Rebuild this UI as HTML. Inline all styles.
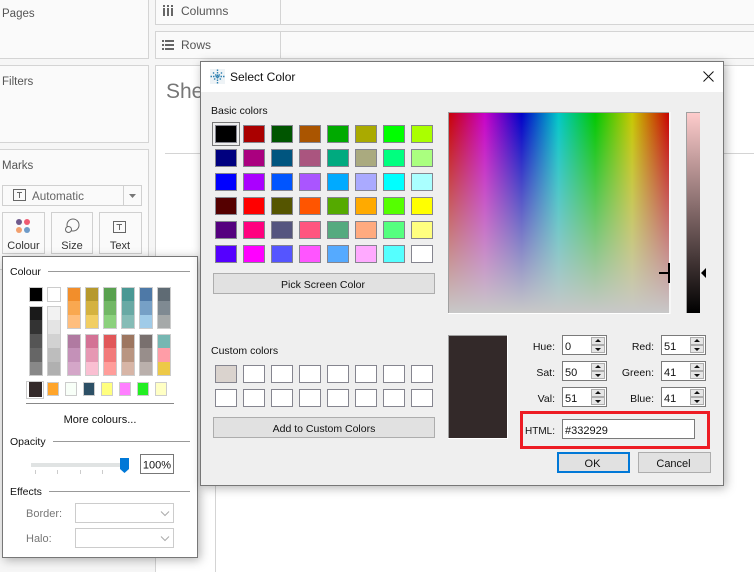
<!DOCTYPE html>
<html><head><meta charset="utf-8"><style>
html,body{margin:0;padding:0;background:#fff;width:754px;height:572px;overflow:hidden}
svg{display:block;font-family:"Liberation Sans",sans-serif}
text{font-size:10.5px;fill:#111}
.g text{fill:#555}
.c{text-anchor:middle}
.r{text-anchor:end}
</style></head><body>
<svg width="754" height="572" viewBox="0 0 754 572" xmlns="http://www.w3.org/2000/svg">
<defs>
<linearGradient id="hue" x1="0" x2="1" y1="0" y2="0">
<stop offset="0" stop-color="#c80000"/><stop offset=".1667" stop-color="#c800c8"/><stop offset=".3333" stop-color="#0000c8"/><stop offset=".5" stop-color="#00c8c8"/><stop offset=".6667" stop-color="#00c800"/><stop offset=".8333" stop-color="#c8c800"/><stop offset="1" stop-color="#c80000"/>
</linearGradient>
<linearGradient id="sat" x1="0" x2="0" y1="0" y2="1"><stop offset="0" stop-color="#c8c8c8" stop-opacity="0"/><stop offset="1" stop-color="#c8c8c8"/></linearGradient>
<linearGradient id="lum" x1="0" x2="0" y1="0" y2="1"><stop offset="0" stop-color="#ffcdcd"/><stop offset="1" stop-color="#000"/></linearGradient>
<filter id="sh" x="-10%" y="-10%" width="120%" height="120%"><feDropShadow dx="2" dy="2" stdDeviation="5" flood-color="#000" flood-opacity=".3"/></filter>
</defs>

<!-- background workspace -->
<rect width="754" height="572" fill="#f6f6f6"/>
<g fill="#fafafa" stroke="#d4d4d4" shape-rendering="crispEdges">
<rect x="-2" y="-2" width="150.500" height="60.500"/>
<rect x="-2" y="65.500" width="150.500" height="77"/>
<rect x="-2" y="149.500" width="150.500" height="120"/>
<rect x="155.500" y="-2" width="610" height="26.500"/>
<rect x="155.500" y="31.500" width="610" height="27"/>
<rect x="155.500" y="65.500" width="610" height="520" fill="#fff"/>
</g>
<g stroke="#d4d4d4" shape-rendering="crispEdges">
<path d="M280.500 0V24M280.500 32V58M165 153.500H754M215.500 153V572"/>
</g>
<g class="g">
<text x="2" y="17" style="font-size:11.5px">Pages</text>
<text x="2" y="85" style="font-size:11.5px">Filters</text>
<text x="2" y="169" style="font-size:11.5px">Marks</text>
<text x="181" y="15" style="font-size:12px">Columns</text>
<text x="181" y="49" style="font-size:12px">Rows</text>
<text x="166" y="98" style="font-size:21px;fill:#777">Sheet 1</text>
</g>
<!-- columns/rows icons -->
<g fill="#666" shape-rendering="crispEdges">
<rect x="163" y="8" width="2" height="8"/><rect x="167" y="8" width="2" height="8"/><rect x="171" y="8" width="2" height="8"/>
<rect x="163" y="5" width="2" height="2"/><rect x="167" y="5" width="2" height="2"/><rect x="171" y="5" width="2" height="2"/>
<rect x="162" y="40" width="2" height="2"/><rect x="162" y="44" width="2" height="2"/><rect x="162" y="48" width="2" height="2"/>
<rect x="165" y="40" width="9" height="2"/><rect x="165" y="44" width="9" height="2"/><rect x="165" y="48" width="9" height="2"/>
</g>

<!-- marks controls -->
<g fill="#fafafa" stroke="#d0d0d0" shape-rendering="crispEdges">
<rect x="2.500" y="185.500" width="139" height="20"/>
<rect x="2.500" y="212.500" width="42" height="41"/>
<rect x="51.500" y="212.500" width="41" height="41"/>
<rect x="99.500" y="212.500" width="42" height="41"/>
<path d="M123.500 186V205" fill="none"/>
</g>
<g fill="none" stroke="#666" shape-rendering="crispEdges">
<rect x="13.500" y="189.500" width="12" height="11"/>
<rect x="113.500" y="221.500" width="12" height="11"/>
<path d="M17 192.500H22M19.500 192.500V198M116.500 224.500H122M119.500 224.500V230"/>
</g>
<path d="M129 194h7l-3.500 4z" fill="#777"/>
<text x="32" y="200" style="font-size:11.7px;fill:#666">Automatic</text>
<circle cx="19" cy="222" r="3" fill="#6f5a8c"/><circle cx="27" cy="222" r="3" fill="#ef5b72"/>
<circle cx="19" cy="230" r="3" fill="#f2a06e"/><circle cx="27" cy="230" r="3" fill="#6f9bc8"/>
<circle cx="73" cy="225" r="6" fill="#fafafa" stroke="#666"/><circle cx="68.500" cy="229.500" r="3" fill="#fafafa" stroke="#666"/>
<text class="c" x="23.500" y="249" style="font-size:11px;fill:#333">Colour</text>
<text class="c" x="72" y="249" style="font-size:11px;fill:#333">Size</text>
<text class="c" x="120" y="249" style="font-size:11px;fill:#333">Text</text>

<!-- colour popup -->
<rect x="2.500" y="256.500" width="195" height="301" fill="#fff" stroke="#777" filter="url(#sh)" shape-rendering="crispEdges"/>
<text x="10" y="275">Colour</text>
<text x="10" y="445">Opacity</text>
<text x="10" y="495">Effects</text>
<g stroke="#999" shape-rendering="crispEdges">
<path d="M48 271.500H190M53 441.500H190M49 491.500H190"/>
<path d="M26 403.500H174" stroke="#888"/>
</g>
<g shape-rendering="crispEdges">
<g fill="#ccc">
<rect x="29" y="287" width="14" height="15"/><rect x="47" y="287" width="14" height="15"/>
<rect x="29" y="306" width="14" height="70"/><rect x="47" y="306" width="14" height="70"/>
<rect x="67" y="287" width="14" height="42"/><rect x="85" y="287" width="14" height="42"/><rect x="103" y="287" width="14" height="42"/><rect x="121" y="287" width="14" height="42"/><rect x="139" y="287" width="14" height="42"/><rect x="157" y="287" width="14" height="42"/>
<rect x="67" y="334" width="14" height="42"/><rect x="85" y="334" width="14" height="42"/><rect x="103" y="334" width="14" height="42"/><rect x="121" y="334" width="14" height="42"/><rect x="139" y="334" width="14" height="42"/><rect x="157" y="334" width="14" height="42"/>
</g>
<rect x="30" y="288" width="12" height="13" fill="#000"/><rect x="48" y="288" width="12" height="13" fill="#fff"/>
<rect x="30" y="307" width="12" height="13" fill="#1a1a1a"/><rect x="30" y="320" width="12" height="14" fill="#333"/><rect x="30" y="334" width="12" height="14" fill="#555"/><rect x="30" y="348" width="12" height="14" fill="#666"/><rect x="30" y="362" width="12" height="13" fill="#888"/>
<rect x="48" y="307" width="12" height="13" fill="#f2f2f2"/><rect x="48" y="320" width="12" height="14" fill="#e4e4e4"/><rect x="48" y="334" width="12" height="14" fill="#d2d2d2"/><rect x="48" y="348" width="12" height="14" fill="#bdbdbd"/><rect x="48" y="362" width="12" height="13" fill="#b0b0b0"/>
<rect x="68" y="288" width="12" height="13" fill="#f28e2b"/><rect x="68" y="301" width="12" height="14" fill="#f9a850"/><rect x="68" y="315" width="12" height="13" fill="#ffbe7d"/>
<rect x="86" y="288" width="12" height="13" fill="#b6992d"/><rect x="86" y="301" width="12" height="14" fill="#d4b240"/><rect x="86" y="315" width="12" height="13" fill="#f1ce63"/>
<rect x="104" y="288" width="12" height="13" fill="#59a14f"/><rect x="104" y="301" width="12" height="14" fill="#72b765"/><rect x="104" y="315" width="12" height="13" fill="#8cd17d"/>
<rect x="122" y="288" width="12" height="13" fill="#499894"/><rect x="122" y="301" width="12" height="14" fill="#69a9a4"/><rect x="122" y="315" width="12" height="13" fill="#86bcb6"/>
<rect x="140" y="288" width="12" height="13" fill="#4e79a7"/><rect x="140" y="301" width="12" height="14" fill="#76a0c6"/><rect x="140" y="315" width="12" height="13" fill="#a0cbe8"/>
<rect x="158" y="288" width="12" height="13" fill="#5f6b74"/><rect x="158" y="301" width="12" height="14" fill="#7f8a92"/><rect x="158" y="315" width="12" height="13" fill="#a5a9a9"/>
<rect x="68" y="335" width="12" height="13" fill="#b07aa1"/><rect x="68" y="348" width="12" height="14" fill="#c491b8"/><rect x="68" y="362" width="12" height="13" fill="#d4a6c8"/>
<rect x="86" y="335" width="12" height="13" fill="#d37295"/><rect x="86" y="348" width="12" height="14" fill="#e698b3"/><rect x="86" y="362" width="12" height="13" fill="#fabfd2"/>
<rect x="104" y="335" width="12" height="13" fill="#e15759"/><rect x="104" y="348" width="12" height="14" fill="#f27a7a"/><rect x="104" y="362" width="12" height="13" fill="#ff9d9a"/>
<rect x="122" y="335" width="12" height="13" fill="#9d7660"/><rect x="122" y="348" width="12" height="14" fill="#b99581"/><rect x="122" y="362" width="12" height="13" fill="#d7b5a6"/>
<rect x="140" y="335" width="12" height="13" fill="#79706e"/><rect x="140" y="348" width="12" height="14" fill="#988e8b"/><rect x="140" y="362" width="12" height="13" fill="#bab0ac"/>
<rect x="158" y="335" width="12" height="13" fill="#76b7b2"/><rect x="158" y="348" width="12" height="14" fill="#ff9da7"/><rect x="158" y="362" width="12" height="13" fill="#edc948"/>
<!-- recent -->
<rect x="26.500" y="381.500" width="17" height="17" fill="#fff" stroke="#ccc"/>
<rect x="29" y="382" width="13" height="15" fill="#332929"/>
<g stroke="#ccc">
<rect x="47.500" y="382.500" width="11" height="13" fill="#ffa52b"/>
<rect x="65.500" y="382.500" width="11" height="13" fill="#f8fff8"/>
<rect x="83.500" y="382.500" width="11" height="13" fill="#2d5066"/>
<rect x="101.500" y="382.500" width="11" height="13" fill="#ffff7f"/>
<rect x="119.500" y="382.500" width="11" height="13" fill="#ff7fff"/>
<rect x="137.500" y="382.500" width="11" height="13" fill="#22ee22"/>
<rect x="155.500" y="382.500" width="11" height="13" fill="#ffffc4"/>
</g>
<!-- slider -->
<rect x="31" y="463" width="91" height="4" fill="#e0e3e3"/>
<path d="M35.500 470V474M57.500 470V474M80.500 470V474M102.500 470V474" stroke="#ccc"/>
</g>
<path d="M120 458h9v11l-4.500 4l-4.500-4z" fill="#0078d7"/>
<rect x="140.500" y="454.500" width="33" height="19" fill="#fff" stroke="#777" shape-rendering="crispEdges"/>
<text class="c" x="157" y="468.500" style="font-size:11px">100%</text>
<text class="c" x="100" y="423" style="font-size:11px">More colours...</text>
<text x="26" y="517" style="font-size:11px;fill:#777">Border:</text>
<text x="26" y="542" style="font-size:11px;fill:#777">Halo:</text>
<g fill="#fff" stroke="#ccc" shape-rendering="crispEdges">
<rect x="75.500" y="503.500" width="98" height="19"/>
<rect x="75.500" y="528.500" width="98" height="19"/>
</g>
<path d="M161 511.500l4 4 4-4M161 536.500l4 4 4-4" fill="none" stroke="#aaa"/>

<!-- dialog -->
<rect x="200.500" y="61.500" width="523" height="424" fill="#efefef" stroke="#777" filter="url(#sh)" shape-rendering="crispEdges"/>
<rect x="201" y="62" width="522" height="30" fill="#fff"/>
<g shape-rendering="crispEdges"><rect x="210" y="69" width="15" height="15" fill="#eef3f6"/></g>
<g stroke="#2f80b0" stroke-width="1.400" fill="none">
<path d="M217.500 69.500V83.500M210.500 76.500H224.500" stroke-dasharray="1.500 1"/>
<path d="M213 72.500L222 80.500M222 72.500L213 80.500" stroke-dasharray="1.500 1.500"/>
</g>
<text x="230" y="81" style="font-size:12px">Select Color</text>
<path d="M703.500 71.500L713.500 81.500M713.500 71.500L703.500 81.500" stroke="#111" fill="none"/>

<text x="211" y="114">Basic colors</text>
<text x="211" y="354">Custom colors</text>

<g stroke="#85858f" shape-rendering="crispEdges">
<rect x="215.500" y="125.500" width="21" height="17" fill="#000000"/><rect x="243.500" y="125.500" width="21" height="17" fill="#aa0000"/><rect x="271.500" y="125.500" width="21" height="17" fill="#005500"/><rect x="299.500" y="125.500" width="21" height="17" fill="#aa5500"/><rect x="327.500" y="125.500" width="21" height="17" fill="#00aa00"/><rect x="355.500" y="125.500" width="21" height="17" fill="#aaaa00"/><rect x="383.500" y="125.500" width="21" height="17" fill="#00ff00"/><rect x="411.500" y="125.500" width="21" height="17" fill="#aaff00"/>
<rect x="215.500" y="149.500" width="21" height="17" fill="#00007f"/><rect x="243.500" y="149.500" width="21" height="17" fill="#aa007f"/><rect x="271.500" y="149.500" width="21" height="17" fill="#00557f"/><rect x="299.500" y="149.500" width="21" height="17" fill="#aa557f"/><rect x="327.500" y="149.500" width="21" height="17" fill="#00aa7f"/><rect x="355.500" y="149.500" width="21" height="17" fill="#aaaa7f"/><rect x="383.500" y="149.500" width="21" height="17" fill="#00ff7f"/><rect x="411.500" y="149.500" width="21" height="17" fill="#aaff7f"/>
<rect x="215.500" y="173.500" width="21" height="17" fill="#0000ff"/><rect x="243.500" y="173.500" width="21" height="17" fill="#aa00ff"/><rect x="271.500" y="173.500" width="21" height="17" fill="#0055ff"/><rect x="299.500" y="173.500" width="21" height="17" fill="#aa55ff"/><rect x="327.500" y="173.500" width="21" height="17" fill="#00aaff"/><rect x="355.500" y="173.500" width="21" height="17" fill="#aaaaff"/><rect x="383.500" y="173.500" width="21" height="17" fill="#00ffff"/><rect x="411.500" y="173.500" width="21" height="17" fill="#aaffff"/>
<rect x="215.500" y="197.500" width="21" height="17" fill="#550000"/><rect x="243.500" y="197.500" width="21" height="17" fill="#ff0000"/><rect x="271.500" y="197.500" width="21" height="17" fill="#555500"/><rect x="299.500" y="197.500" width="21" height="17" fill="#ff5500"/><rect x="327.500" y="197.500" width="21" height="17" fill="#55aa00"/><rect x="355.500" y="197.500" width="21" height="17" fill="#ffaa00"/><rect x="383.500" y="197.500" width="21" height="17" fill="#55ff00"/><rect x="411.500" y="197.500" width="21" height="17" fill="#ffff00"/>
<rect x="215.500" y="221.500" width="21" height="17" fill="#55007f"/><rect x="243.500" y="221.500" width="21" height="17" fill="#ff007f"/><rect x="271.500" y="221.500" width="21" height="17" fill="#55557f"/><rect x="299.500" y="221.500" width="21" height="17" fill="#ff557f"/><rect x="327.500" y="221.500" width="21" height="17" fill="#55aa7f"/><rect x="355.500" y="221.500" width="21" height="17" fill="#ffaa7f"/><rect x="383.500" y="221.500" width="21" height="17" fill="#55ff7f"/><rect x="411.500" y="221.500" width="21" height="17" fill="#ffff7f"/>
<rect x="215.500" y="245.500" width="21" height="17" fill="#5500ff"/><rect x="243.500" y="245.500" width="21" height="17" fill="#ff00ff"/><rect x="271.500" y="245.500" width="21" height="17" fill="#5555ff"/><rect x="299.500" y="245.500" width="21" height="17" fill="#ff55ff"/><rect x="327.500" y="245.500" width="21" height="17" fill="#55aaff"/><rect x="355.500" y="245.500" width="21" height="17" fill="#ffaaff"/><rect x="383.500" y="245.500" width="21" height="17" fill="#55ffff"/><rect x="411.500" y="245.500" width="21" height="17" fill="#ffffff"/>
<rect x="215.500" y="365.500" width="21" height="17" fill="#dad3ce"/><rect x="243.500" y="365.500" width="21" height="17" fill="#fff"/><rect x="271.500" y="365.500" width="21" height="17" fill="#fff"/><rect x="299.500" y="365.500" width="21" height="17" fill="#fff"/><rect x="327.500" y="365.500" width="21" height="17" fill="#fff"/><rect x="355.500" y="365.500" width="21" height="17" fill="#fff"/><rect x="383.500" y="365.500" width="21" height="17" fill="#fff"/><rect x="411.500" y="365.500" width="21" height="17" fill="#fff"/>
<rect x="215.500" y="389.500" width="21" height="17" fill="#fff"/><rect x="243.500" y="389.500" width="21" height="17" fill="#fff"/><rect x="271.500" y="389.500" width="21" height="17" fill="#fff"/><rect x="299.500" y="389.500" width="21" height="17" fill="#fff"/><rect x="327.500" y="389.500" width="21" height="17" fill="#fff"/><rect x="355.500" y="389.500" width="21" height="17" fill="#fff"/><rect x="383.500" y="389.500" width="21" height="17" fill="#fff"/><rect x="411.500" y="389.500" width="21" height="17" fill="#fff"/>
</g>
<rect x="212.500" y="122.500" width="27" height="23" fill="none" stroke="#000" stroke-dasharray="1 1"/>

<g fill="#e1e1e1" stroke="#adadad" shape-rendering="crispEdges">
<rect x="213.500" y="273.500" width="221" height="20"/>
<rect x="213.500" y="417.500" width="221" height="20"/>
<rect x="638.500" y="452.500" width="72" height="20"/>
</g>
<rect x="558" y="453" width="71" height="19" fill="#e1e1e1" stroke="#0078d7" stroke-width="2" shape-rendering="crispEdges"/>
<text class="c" x="323" y="288">Pick Screen Color</text>
<text class="c" x="324" y="432">Add to Custom Colors</text>
<text class="c" x="592.500" y="467" style="font-size:11px">OK</text>
<text class="c" x="673.500" y="467" style="font-size:11px">Cancel</text>

<!-- colour field -->
<g shape-rendering="crispEdges">
<rect x="448" y="112" width="221" height="201" fill="url(#hue)"/>
<rect x="448" y="112" width="221" height="201" fill="url(#sat)"/>
<path d="M448.500 313V112.500H669" stroke="#a0a0a0" fill="none"/>
<path d="M448 313.500H670V112" stroke="#fff" fill="none"/>
<rect x="686" y="112" width="14" height="201" fill="url(#lum)"/>
<path d="M686.500 313V112.500H700" stroke="#a0a0a0" fill="none"/>
<rect x="668" y="263" width="2" height="20" fill="#000"/>
<rect x="659" y="272" width="10" height="2" fill="#000"/>
<rect x="448" y="335" width="59" height="103" fill="#332929"/>
<path d="M448.500 438V335.500H507" stroke="#a0a0a0" fill="none"/>
<path d="M448 438.500H507.500V335" stroke="#fff" fill="none"/>
</g>
<path d="M701 273l5-5v10z" fill="#000"/>

<!-- spin boxes -->
<g fill="#fff" stroke="#7a7a7a" shape-rendering="crispEdges">
<rect x="562.500" y="335.500" width="44" height="19"/><rect x="562.500" y="361.500" width="44" height="19"/><rect x="562.500" y="387.500" width="44" height="19"/>
<rect x="661.500" y="335.500" width="44" height="19"/><rect x="661.500" y="361.500" width="44" height="19"/><rect x="661.500" y="387.500" width="44" height="19"/>
<rect x="562.500" y="419.500" width="132" height="19"/>
</g>
<g fill="#e6e6e6" stroke="#adadad" shape-rendering="crispEdges">
<rect x="591.500" y="337.500" width="13" height="7"/><rect x="591.500" y="345.500" width="13" height="7"/>
<rect x="591.500" y="363.500" width="13" height="7"/><rect x="591.500" y="371.500" width="13" height="7"/>
<rect x="591.500" y="389.500" width="13" height="7"/><rect x="591.500" y="397.500" width="13" height="7"/>
<rect x="690.500" y="337.500" width="13" height="7"/><rect x="690.500" y="345.500" width="13" height="7"/>
<rect x="690.500" y="363.500" width="13" height="7"/><rect x="690.500" y="371.500" width="13" height="7"/>
<rect x="690.500" y="389.500" width="13" height="7"/><rect x="690.500" y="397.500" width="13" height="7"/>
</g>
<g fill="#111">
<path d="M598 339l3 3h-6zM598 351l3-3h-6zM598 365l3 3h-6zM598 377l3-3h-6zM598 391l3 3h-6zM598 403l3-3h-6z"/>
<path d="M697 339l3 3h-6zM697 351l3-3h-6zM697 365l3 3h-6zM697 377l3-3h-6zM697 391l3 3h-6zM697 403l3-3h-6z"/>
</g>
<g>
<text class="r" x="555" y="350">Hue:</text><text class="r" x="555" y="376">Sat:</text><text class="r" x="555" y="402">Val:</text>
<text class="r" x="654" y="350">Red:</text><text class="r" x="654" y="376">Green:</text><text class="r" x="654" y="402">Blue:</text>
<text class="r" x="555" y="434" textLength="30" lengthAdjust="spacingAndGlyphs">HTML:</text>
<text x="565" y="350" style="font-size:11px">0</text><text x="565" y="376" style="font-size:11px">50</text><text x="565" y="402" style="font-size:11px">51</text>
<text x="664" y="350" style="font-size:11px">51</text><text x="664" y="376" style="font-size:11px">41</text><text x="664" y="402" style="font-size:11px">41</text>
<text x="565" y="434" style="font-size:11px">#332929</text>
</g>
<path fill="#ed1c24" fill-rule="evenodd" d="M520 411H710V449H520ZM523 414V446H707V414Z" shape-rendering="crispEdges"/>
</svg>
</body></html>
